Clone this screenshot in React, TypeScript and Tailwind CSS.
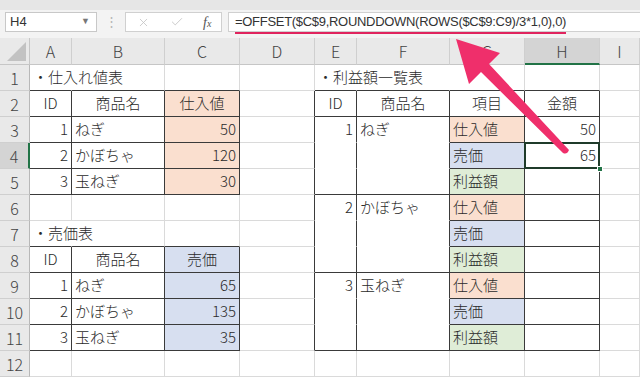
import { X, Check } from "lucide-react";

const COLS = ["A", "B", "C", "D", "E", "F", "G", "H", "I"];
const ROWS = [1, 2, 3, 4, 5, 6, 7, 8, 9, 10, 11, 12];

type Cell = { t: string; a?: "l" | "c" | "r"; fill?: "o" | "b" | "g" };

const cells: Record<string, Cell> = {
  A1: { t: "・仕入れ値表" },
  A2: { t: "ID", a: "c" },
  B2: { t: "商品名", a: "c" },
  C2: { t: "仕入値", a: "c", fill: "o" },
  A3: { t: "1", a: "r" },
  B3: { t: "ねぎ" },
  C3: { t: "50", a: "r", fill: "o" },
  A4: { t: "2", a: "r" },
  B4: { t: "かぼちゃ" },
  C4: { t: "120", a: "r", fill: "o" },
  A5: { t: "3", a: "r" },
  B5: { t: "玉ねぎ" },
  C5: { t: "30", a: "r", fill: "o" },
  A7: { t: "・売価表" },
  A8: { t: "ID", a: "c" },
  B8: { t: "商品名", a: "c" },
  C8: { t: "売価", a: "c", fill: "b" },
  A9: { t: "1", a: "r" },
  B9: { t: "ねぎ" },
  C9: { t: "65", a: "r", fill: "b" },
  A10: { t: "2", a: "r" },
  B10: { t: "かぼちゃ" },
  C10: { t: "135", a: "r", fill: "b" },
  A11: { t: "3", a: "r" },
  B11: { t: "玉ねぎ" },
  C11: { t: "35", a: "r", fill: "b" },
  E1: { t: "・利益額一覧表" },
  E2: { t: "ID", a: "c" },
  F2: { t: "商品名", a: "c" },
  G2: { t: "項目", a: "c" },
  H2: { t: "金額", a: "c" },
  E3: { t: "1", a: "r" },
  F3: { t: "ねぎ" },
  G3: { t: "仕入値", fill: "o" },
  H3: { t: "50", a: "r" },
  G4: { t: "売価", fill: "b" },
  H4: { t: "65", a: "r" },
  G5: { t: "利益額", fill: "g" },
  E6: { t: "2", a: "r" },
  F6: { t: "かぼちゃ" },
  G6: { t: "仕入値", fill: "o" },
  G7: { t: "売価", fill: "b" },
  G8: { t: "利益額", fill: "g" },
  E9: { t: "3", a: "r" },
  F9: { t: "玉ねぎ" },
  G9: { t: "仕入値", fill: "o" },
  G10: { t: "売価", fill: "b" },
  G11: { t: "利益額", fill: "g" },
};

const inTable = (r: number) => (r >= 2 && r <= 5) || (r >= 8 && r <= 11);

// bottom edge of a cell: dark table line, none (merged look) or normal gridline
function bottomClass(r: number, c: number) {
  if (c <= 2 && ((r >= 1 && r <= 5) || (r >= 7 && r <= 11))) return "border-b-[#3a3a3a]";
  if (c >= 4 && c <= 7 && (r === 1 || r === 2)) return "border-b-[#3a3a3a]";
  if (c >= 6 && c <= 7 && r >= 3 && r <= 11) return "border-b-[#3a3a3a]";
  if (c >= 4 && c <= 5 && r >= 3 && r <= 11) {
    return r === 5 || r === 8 || r === 11 ? "border-b-[#3a3a3a]" : "border-b-white";
  }
  return "border-b-[#dadada]";
}

function rightClass(r: number, c: number) {
  if (c <= 2 && inTable(r)) return "border-r-[#3a3a3a]";
  if (c >= 3 && c <= 7 && r >= 2 && r <= 11) return "border-r-[#3a3a3a]";
  if ((r === 1 && (c === 0 || c === 4 || c === 5)) || (r === 7 && c === 0)) return "border-r-white";
  return "border-r-[#dadada]";
}

const fillClass = { o: "bg-[#fadfcf]", b: "bg-[#d7dff0]", g: "bg-[#dfedd7]" };
const alignClass = { l: "justify-start pl-[3px]", c: "justify-center", r: "justify-end pr-[3px]" };

function SheetCell({ r, c }: { r: number; c: number }) {
  const key = COLS[c] + r;
  const cell = cells[key];
  const selected = key === "H4";
  return (
    <div
      className={`relative flex items-center border-r border-b whitespace-nowrap ${bottomClass(r, c)} ${rightClass(r, c)} ${
        cell?.fill ? fillClass[cell.fill] : ""
      } ${cell ? alignClass[cell.a ?? "l"] : ""}`}
    >
      {cell && <span className="relative z-10">{cell.t}</span>}
      {selected && (
        <>
          <div className="absolute -left-px -top-px -right-px -bottom-px border-2 border-[#1f3b2a] z-20" />
          <div className="absolute -right-[4px] -bottom-[4px] w-[6px] h-[6px] bg-[#217346] border border-white z-30" />
        </>
      )}
    </div>
  );
}

function Toolbar() {
  return (
    <div className="flex flex-col">
      <div className="h-[10px] bg-[#e6e6e6]" />
      <div className="h-[28px] bg-[#f3f3f3] flex items-start pt-[2px] font-['Liberation_Sans',sans-serif] text-[#333]">
        <div className="ml-[5px] w-[92px] h-[20px] bg-white border border-[#c8c8c8] flex items-center justify-between pl-[4px] pr-[6px] text-[13px]">
          <span>H4</span>
          <span className="text-[9px] text-[#777]">▼</span>
        </div>
        <div className="w-[28px] h-[20px] flex items-center justify-center text-[#b5b5b5] text-[13px]">⋮</div>
        <div className="w-[97px] h-[20px] bg-white border border-[#d0d0d0] flex items-center text-[#c4c4c4]">
          <X className="ml-[11px]" size={13} strokeWidth={1.5} />
          <Check className="ml-[20px]" size={14} strokeWidth={1.5} />
          <span className="ml-[19px] font-['Liberation_Serif',serif] italic text-[14px] text-[#555]">
            f<span className="text-[10px]">x</span>
          </span>
        </div>
        <div className="ml-[6px] flex-1 h-[20px] bg-white border-y border-l border-[#d0d0d0] flex items-start pl-[6px] text-[13px] text-[#333]">
          <span className="pb-[2px] border-b-2 border-[#e0245e] leading-[17px] tracking-[-0.3px]">
            =OFFSET($C$9,ROUNDDOWN(ROWS($C$9:C9)/3*1,0),0)
          </span>
        </div>
      </div>
    </div>
  );
}

function Arrow() {
  return (
    <svg className="absolute left-0 top-0 pointer-events-none z-40" width={640} height={380} viewBox="0 0 640 380">
      <path d="M456 39 L500 53 L489 64 L569 150 Q567 155 563 153 L481 72 L469 84 Z" fill="#ef2f6b" />
    </svg>
  );
}

export default function App() {
  return (
    <div className="relative w-[640px] h-[380px] overflow-hidden bg-white">
      <Toolbar />
      <div className="grid grid-cols-[30px_42px_93px_75px_75px_42px_93px_75px_75px_40px] grid-rows-[27px_repeat(12,26px)] font-['Noto_Sans_CJK_JP',sans-serif] font-light text-[15px] text-[#2a2a2a]">
        <div className="relative bg-[#e9e9e9] border-r border-b border-[#c6c6c6]">
          <svg className="absolute right-[3px] bottom-[3px]" width={19} height={19} viewBox="0 0 19 19">
            <path d="M19 0 L19 19 L0 19 Z" fill="#c2c2c2" />
          </svg>
        </div>
        {COLS.map((col) => (
          <div
            key={col}
            className={`flex items-center justify-center text-[16px] text-[#444] border-r border-[#cfcfcf] ${
              col === "H" ? "bg-[#d4d4d4] border-b-2 border-b-[#217346]" : "bg-[#e9e9e9] border-b border-b-[#c6c6c6]"
            }`}
          >
            {col}
          </div>
        ))}
        {ROWS.map((r) => (
          <div key={r} className="contents">
            <div
              className={`flex items-center justify-center text-[16px] text-[#444] border-b border-[#cfcfcf] ${
                r === 4 ? "bg-[#d4d4d4] border-r-2 border-r-[#217346]" : "bg-[#e9e9e9] border-r border-r-[#b8b8b8]"
              }`}
            >
              {r}
            </div>
            {COLS.map((_, c) => (
              <SheetCell key={c} r={r} c={c} />
            ))}
          </div>
        ))}
      </div>
      <Arrow />
    </div>
  );
}
